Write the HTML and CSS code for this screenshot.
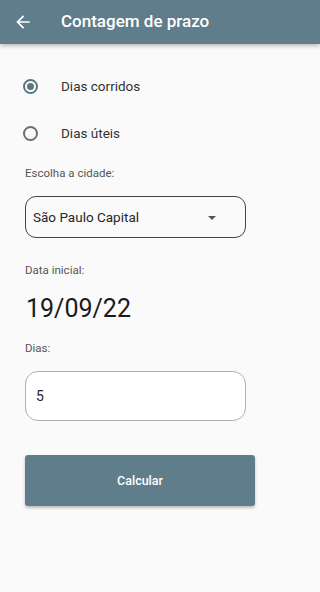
FILE: index.html
```html
<!DOCTYPE html>
<html lang="pt">
<head>
<meta charset="utf-8">
<link rel="stylesheet" href="styles.css">
</head>
<body>
<header class="appbar">
  <svg class="back" viewBox="0 0 24 24" width="20" height="20"><path d="M20 11H7.83l5.59-5.59L12 4l-8 8 8 8 1.41-1.41L7.83 13H20v-2z" fill="#fff"/></svg>
  <h1 class="title">Contagem de prazo</h1>
</header>
<main class="content">
  <div class="radio-row"><span class="radio checked"></span><span class="radio-label">Dias corridos</span></div>
  <div class="radio-row second"><span class="radio"></span><span class="radio-label">Dias úteis</span></div>
  <div class="label first-label">Escolha a cidade:</div>
  <div class="select">
    <span class="select-text">São Paulo Capital</span>
    <span class="caret"></span>
  </div>
  <div class="label date-label">Data inicial:</div>
  <div class="date">19/09/22</div>
  <div class="label days-label">Dias:</div>
  <div class="input">5</div>
  <button class="btn">Calcular</button>
</main>
</body>
</html>
```
FILE: styles.css
```css
html, body {
  margin: 0;
  padding: 0;
  background: #fafafa;
  font-family: Roboto, "Noto Sans", sans-serif;
  color: #222;
  height: 592px;
  overflow: hidden;
}
.appbar {
  height: 44px;
  background: #607d8b;
  display: flex;
  align-items: center;
  box-shadow: 0 2px 4px rgba(0,0,0,0.25);
}
.back {
  margin-left: 13px;
  margin-top: -1px;
}
.title {
  margin: 0 0 0 28px;
  font-size: 17px;
  font-weight: 500;
  color: #fff;
  line-height: 1;
  margin-top: -2px;
}
.content {
  padding: 0 0 0 25px;
  display: flex;
  flex-direction: column;
}
.radio-row {
  display: flex;
  align-items: center;
  height: 20px;
  margin-top: 32px;
}
.radio-row.second {
  margin-top: 27px;
}
.radio {
  width: 11px;
  height: 11px;
  border: 2px solid #6f6f6f;
  border-radius: 50%;
  margin-left: -2px;
  position: relative;
  box-sizing: content-box;
}
.radio.checked {
  border-color: #5b7683;
}
.radio.checked::after {
  content: "";
  position: absolute;
  left: 2px;
  top: 2px;
  width: 7px;
  height: 7px;
  border-radius: 50%;
  background: #5b7683;
}
.radio-label {
  margin-left: 23px;
  font-size: 13.5px;
  color: #333;
}
.label {
  font-size: 11.5px;
  color: #555;
  line-height: 14px;
}
.first-label { margin-top: 23px; }
.select {
  margin-top: 16px;
  width: 221px;
  height: 42px;
  box-sizing: border-box;
  border: 1px solid #444;
  border-radius: 11px;
  display: flex;
  align-items: center;
  padding-left: 7px;
  position: relative;
}
.select-text {
  font-size: 13.5px;
  color: #262626;
}
.caret {
  position: absolute;
  left: 182px;
  top: 19px;
  width: 0;
  height: 0;
  border-left: 4px solid transparent;
  border-right: 4px solid transparent;
  border-top: 4px solid #555;
}
.date-label { margin-top: 25px; }
.date {
  margin-top: 18px;
  font-size: 25px;
  line-height: 28px;
  color: #1a1a1a;
  margin-left: 1px;
}
.days-label { margin-top: 18px; }
.input {
  margin-top: 16px;
  width: 221px;
  height: 50px;
  box-sizing: border-box;
  border: 1px solid #b0b0b0;
  border-radius: 13px;
  background: #fff;
  display: flex;
  align-items: center;
  padding-left: 10px;
  font-size: 14px;
  color: #262626;
}
.btn {
  margin-top: 34px;
  width: 230px;
  height: 51px;
  border: none;
  border-radius: 3px;
  background: #607d8b;
  color: #fff;
  font-family: Roboto, sans-serif;
  font-size: 12.5px;
  font-weight: 500;
  box-shadow: 0 2px 3px rgba(0,0,0,0.25);
  padding: 0;
}
```
